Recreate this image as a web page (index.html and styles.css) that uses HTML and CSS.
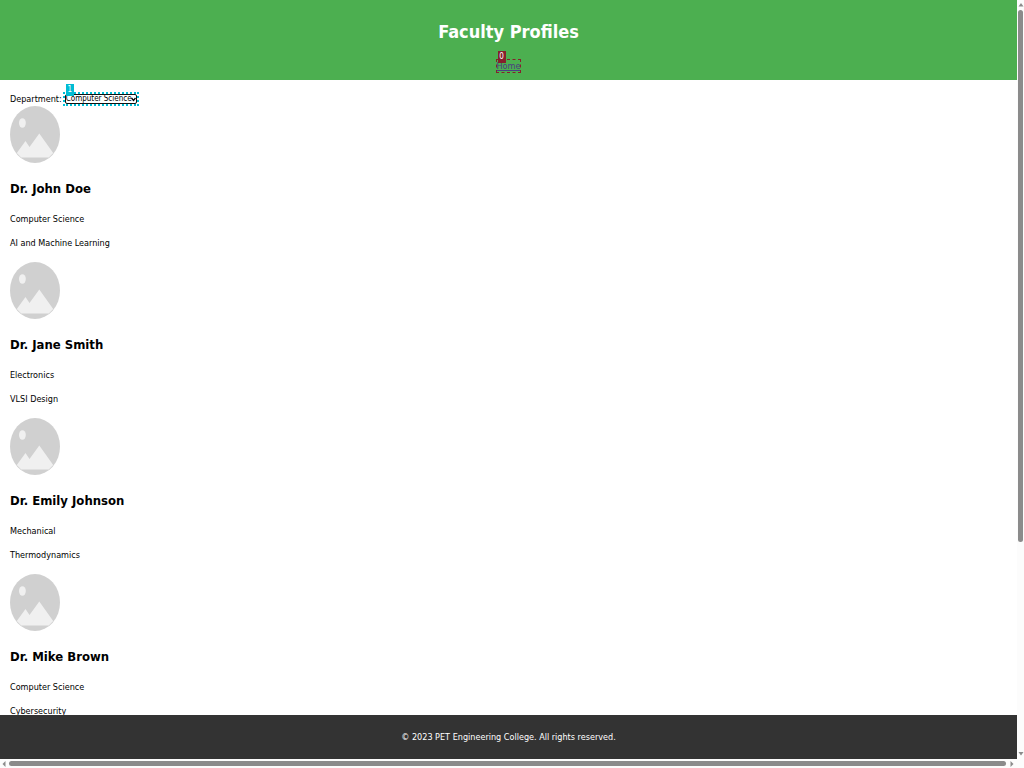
FILE: index.html
```html
<!DOCTYPE html>
<html lang="en">
<head>
<meta charset="utf-8">
<title>Faculty Profiles</title>
<link rel="stylesheet" href="styles.css">
</head>
<body>
<svg class="defs" aria-hidden="true">
  <symbol id="photo" viewBox="0 0 50 57" preserveAspectRatio="none">
    <ellipse cx="25" cy="28.5" rx="25" ry="28.5" fill="#d0d0d0"/>
    <ellipse cx="12.4" cy="17" rx="3.4" ry="4.8" fill="#f0f0f0"/>
    <path d="M6.8 47 L15.5 35 L19.5 41 L29.3 27.5 L43.2 47 L38.8 51.5 H11.2 Z" fill="#f0f0f0"/>
  </symbol>
</svg>
<div class="viewport">
  <div class="page">
    <header class="header">
      <h1 class="title">Faculty Profiles</h1>
      <nav class="nav"><a class="home" href="#">Home<span class="tag tag-red">0</span></a></nav>
    </header>
    <main class="content">
      <div class="filter">
        <label for="dept">Department:</label>
        <span class="picker">
          <select id="dept" class="select"><option>Computer Science</option><option>Electronics</option><option>Mechanical</option></select>
          <svg class="chevron" viewBox="0 0 5 5"><path d="M0.5 1 L2.5 3.5 L4.5 1" fill="none" stroke="#000" stroke-width="1.3"/></svg>
          <span class="tag tag-cyan">1</span>
        </span>
      </div>
      <article class="profile">
        <svg class="photo" role="img" aria-label="Dr. John Doe"><use href="#photo"/></svg>
        <h2 class="name">Dr. John Doe</h2>
        <p class="line">Computer Science</p>
        <p class="line">AI and Machine Learning</p>
      </article>
      <article class="profile">
        <svg class="photo" role="img" aria-label="Dr. Jane Smith"><use href="#photo"/></svg>
        <h2 class="name">Dr. Jane Smith</h2>
        <p class="line">Electronics</p>
        <p class="line">VLSI Design</p>
      </article>
      <article class="profile">
        <svg class="photo" role="img" aria-label="Dr. Emily Johnson"><use href="#photo"/></svg>
        <h2 class="name">Dr. Emily Johnson</h2>
        <p class="line">Mechanical</p>
        <p class="line">Thermodynamics</p>
      </article>
      <article class="profile">
        <svg class="photo" role="img" aria-label="Dr. Mike Brown"><use href="#photo"/></svg>
        <h2 class="name">Dr. Mike Brown</h2>
        <p class="line">Computer Science</p>
        <p class="line">Cybersecurity</p>
      </article>
    </main>
    <footer class="footer">© 2023 PET Engineering College. All rights reserved.</footer>
  </div>
  <div class="vbar">
    <svg class="arrow" viewBox="0 0 8 10"><path d="M4 3 L6.5 6.5 H1.5 Z"/></svg>
    <div class="vtrack"><div class="vthumb"></div></div>
    <svg class="arrow" viewBox="0 0 8 10"><path d="M1.5 3 H6.5 L4 6.5 Z"/></svg>
  </div>
  <div class="hbar">
    <svg class="arrow" viewBox="0 0 8 10"><path d="M5.5 2 V8 L2.5 5 Z"/></svg>
    <div class="htrack"><div class="hthumb"></div></div>
    <svg class="arrow" viewBox="0 0 8 10"><path d="M2.5 2 V8 L5.5 5 Z"/></svg>
  </div>
</div>
</body>
</html>
```
FILE: styles.css
```css
* { box-sizing: border-box; }
body {
  margin: 0;
  background: #fff;
  color: #000;
  font: 9px/12px "DejaVu Sans Condensed", "DejaVu Sans", sans-serif;
}
.defs { display: none; }
.viewport {
  display: grid;
  grid-template: minmax(0, 1fr) 9px / minmax(0, 1fr) 7px;
  height: 100vh;
  overflow: hidden;
}
.page { display: flex; flex-direction: column; min-height: 0; }
.header {
  padding: 20px 10px 8px;
  background: #4caf50;
  color: #fff;
  text-align: center;
}
.title { margin: 0; font-size: 18px; line-height: 24px; }
.nav { display: flex; justify-content: center; padding-top: 16px; }
.home {
  position: relative;
  outline: 1px dashed #85202c;
  color: #4b3d83;
}
.tag {
  position: absolute;
  width: 8px;
  height: 12px;
  color: #fff;
  font-size: 8px;
  line-height: 12px;
  text-align: center;
}
.tag-red { left: 1px; top: -9px; background: #85202c; }
.tag-cyan { left: 1px; top: -10px; background: #00bcd4; }
.content { flex: 1; min-height: 0; overflow: hidden; padding: 12px 10px 0; }
.filter { display: flex; align-items: center; gap: 3px; height: 14px; }
.picker { position: relative; display: flex; outline: 2px dotted #00bcd4; }
.select {
  appearance: none;
  width: 72px;
  height: 10px;
  margin: 0;
  padding: 0;
  border: 1px solid #111;
  border-radius: 2px;
  background: #fff;
  color: #000;
  font: 8px/8px "DejaVu Sans Condensed", "DejaVu Sans", sans-serif;
}
.chevron { position: absolute; right: 1px; top: 3px; width: 5px; height: 5px; pointer-events: none; }
.photo { display: block; width: 50px; height: 57px; }
.profile { padding-bottom: 13px; }
.name { margin: 18px 0 16px; font-size: 13px; line-height: 16px; }
.line { margin: 0; }
.line + .line { margin-top: 12px; }
.footer {
  padding: 16px 10px;
  background: #333;
  color: #fff;
  text-align: center;
}
.vbar { display: flex; flex-direction: column; align-items: center; background: #fcfcfc; }
.hbar { grid-column: 1 / -1; display: flex; align-items: center; padding-right: 8px; background: #fcfcfc; }
.arrow { flex: none; width: 8px; height: 10px; fill: #8b8b8b; }
.vtrack { flex: 1; }
.vthumb { width: 5px; height: 72%; border-radius: 3px; background: #8b8b8b; }
.htrack { flex: 1; padding: 0 2px 0 1px; }
.hthumb { height: 5px; border-radius: 3px; background: #8b8b8b; }
```
